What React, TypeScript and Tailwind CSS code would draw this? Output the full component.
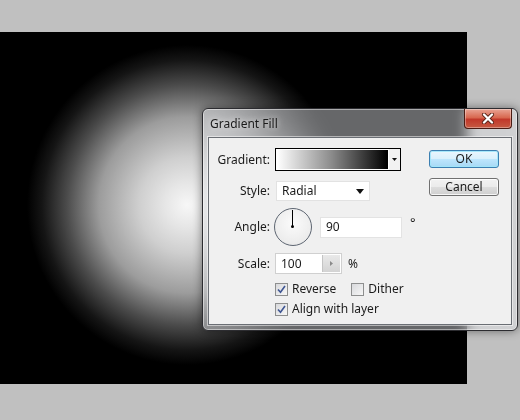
import { ReactNode } from 'react'

const FONT = "font-['Noto_Sans','Open_Sans',sans-serif]"

function Label({ children }: { children: ReactNode }) {
  return <span className="w-[61px] shrink-0 text-right">{children}</span>
}

function Checkbox({ checked, label }: { checked?: boolean; label: string }) {
  return (
    <label className="flex items-center gap-[4px]">
      <span className="flex size-[13px] items-center justify-center border border-[#8e8f8f] bg-[linear-gradient(135deg,#d8d9dc,#f7f7f7)]">
        {checked && (
          <svg width="9" height="9" viewBox="0 0 9 9">
            <path d="M1 4.5 L3.5 7.2 L8 1" fill="none" stroke="#3e5592" strokeWidth="1.6" />
          </svg>
        )}
      </span>
      <span>{label}</span>
    </label>
  )
}

function CloseButton() {
  return (
    <div className="absolute right-[5px] top-0 flex h-[20px] w-[48px] items-center justify-center rounded-b-[4px] border border-t-0 border-[#4a1c14] bg-[linear-gradient(#e9a595,#d86850_45%,#c1382a_55%,#c65a42)] shadow-[inset_0_0_0_1px_rgba(255,255,255,0.35)]">
      <svg width="14" height="11" viewBox="0 0 14 11">
        <path d="M3 1.5 L11 9.5 M11 1.5 L3 9.5" stroke="#5a2418" strokeWidth="4" strokeLinecap="round" />
        <path d="M3 1.5 L11 9.5 M11 1.5 L3 9.5" stroke="#ffffff" strokeWidth="2.3" strokeLinecap="round" />
      </svg>
    </div>
  )
}

function GradientFillDialog() {
  return (
    <div
      className={`absolute left-[202px] top-[108px] h-[223px] w-[316px] rounded-[6px] border border-[#2c2c30] bg-[#e2e4e8]/45 px-[5px] pb-[5px] text-[12px] text-[#1b1b1b] shadow-[0_0_10px_rgba(0,0,0,0.45),inset_0_0_0_1px_rgba(255,255,255,0.45)] backdrop-blur-[7px] ${FONT}`}
    >
      <CloseButton />
      <div className="flex h-[28px] items-center pl-[2px] pt-[1px] [text-shadow:0_0_6px_rgba(255,255,255,0.9)]">
        Gradient Fill
      </div>

      <div className="flex h-[188px] border border-[#6a6e74] bg-[#f0f0f0] shadow-[0_0_0_1px_rgba(255,255,255,0.5)]">
        <div className="flex flex-col pt-[10px]">
          <div className="flex h-[23px] items-center gap-[5px]">
            <Label>Gradient:</Label>
            <div className="flex h-[23px] w-[126px] border border-black bg-white">
              <div className="m-[1px] flex-1 border-r border-black bg-[linear-gradient(90deg,#ffffff,#8a8a8a_50%,#000000)]" />
              <div className="flex w-[11px] items-center justify-center bg-[#f2f2f2]">
                <svg width="5" height="3" viewBox="0 0 5 3">
                  <path d="M0 0 H5 L2.5 3 Z" fill="#111" />
                </svg>
              </div>
            </div>
          </div>

          <div className="mt-[10px] flex h-[20px] items-center gap-[5px]">
            <Label>Style:</Label>
            <div className="ml-[1px] flex h-[20px] w-[94px] items-center justify-between border border-[#e2e2e2] bg-white pl-[5px] pr-[5px]">
              <span>Radial</span>
              <svg width="8" height="5" viewBox="0 0 8 5">
                <path d="M0 0 H8 L4 5 Z" fill="#111" />
              </svg>
            </div>
          </div>

          <div className="mt-[7px] flex h-[38px] items-center gap-[5px]">
            <Label>Angle:</Label>
            <div className="relative -ml-[1px] size-[38px] rounded-full border-[1.5px] border-[#5e6672] bg-[radial-gradient(circle_at_50%_40%,#fbfbfb,#ececec_70%,#dcdcdc)]">
              <div className="absolute left-[17px] top-[1px] h-[17px] w-px bg-black" />
              <div className="absolute left-[16px] top-[16px] size-[3px] rounded-full bg-black" />
            </div>
            <div className="ml-[3px] flex h-[21px] w-[82px] items-center border border-[#e3e3e3] bg-white pl-[5px]">
              90
            </div>
            <span className="-mt-[8px] ml-[3px] text-[13px]">°</span>
          </div>

          <div className="mt-[7px] flex h-[21px] items-center gap-[5px]">
            <Label>Scale:</Label>
            <div className="flex h-[21px] w-[67px] border border-[#d0d0d0] bg-white">
              <span className="flex flex-1 items-center pl-[5px]">100</span>
              <div className="my-[1px] mr-[1px] flex w-[18px] items-center justify-center border-l border-[#c4c4c4] bg-[linear-gradient(#e9e9e9,#d3d3d3)]">
                <svg width="3" height="5" viewBox="0 0 3 5">
                  <path d="M0 0 L3 2.5 L0 5 Z" fill="#8a8a8a" />
                </svg>
              </div>
            </div>
            <span className="ml-[1px]">%</span>
          </div>

          <div className="ml-[66px] mt-[8px] flex h-[14px] items-center gap-[15px]">
            <Checkbox checked label="Reverse" />
            <Checkbox label="Dither" />
          </div>
          <div className="ml-[66px] mt-[6px] flex h-[14px] items-center">
            <Checkbox checked label="Align with layer" />
          </div>
        </div>

        <div className="ml-auto mr-[12px] flex flex-col gap-[10px] pt-[12px]">
          <button
            type="button"
            className="flex h-[18px] w-[70px] items-center justify-center rounded-[3px] border border-[#3c7fb1] bg-[linear-gradient(#eaf6fd,#d9f0fc_50%,#bee6fd_50%,#a7d9f5)] shadow-[inset_0_0_0_1px_rgba(160,230,250,0.9)]"
          >
            OK
          </button>
          <button
            type="button"
            className="flex h-[18px] w-[70px] items-center justify-center rounded-[3px] border border-[#707070] bg-[linear-gradient(#f2f2f2,#ebebeb_50%,#dddddd_50%,#cfcfcf)] shadow-[inset_0_0_0_1px_rgba(255,255,255,0.8)]"
          >
            Cancel
          </button>
        </div>
      </div>
    </div>
  )
}

export default function App() {
  return (
    <div className="relative h-[420px] w-[520px] overflow-hidden bg-[#c0c0c0]">
      <div className="mt-[32px] h-[352px] w-[467px] bg-[radial-gradient(circle_at_187px_173px,#f7f7f7_0px,#e6e6e6_22px,#cfcfcf_48px,#9c9c9c_88px,#4c4c4c_120px,#151515_145px,#000000_160px)]" />
      <GradientFillDialog />
    </div>
  )
}
